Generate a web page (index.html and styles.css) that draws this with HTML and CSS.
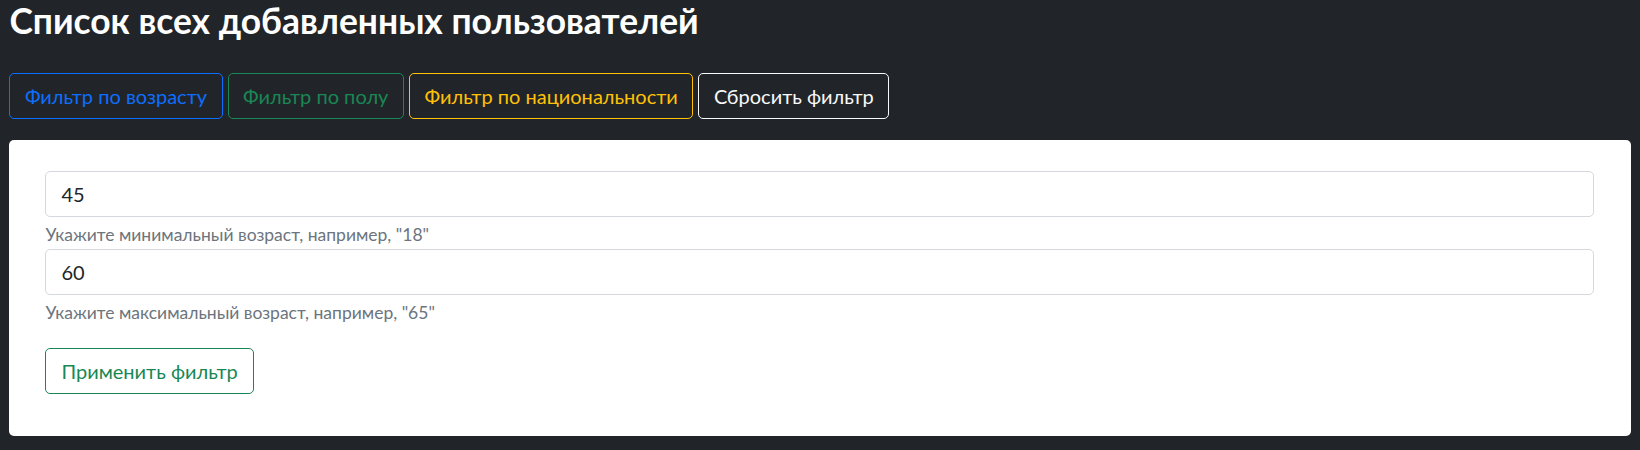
FILE: index.html
```html
<!DOCTYPE html>
<html lang="ru">
<head>
<meta charset="utf-8">
<title>Список пользователей</title>
<link rel="stylesheet" href="styles.css">
</head>
<body>
<div class="container">
  <h3 class="title">Список всех добавленных пользователей</h3>
  <div class="filters">
    <button class="btn btn-blue">Фильтр по возрасту</button>
    <button class="btn btn-green">Фильтр по полу</button>
    <button class="btn btn-yellow">Фильтр по национальности</button>
    <button class="btn btn-light">Сбросить фильтр</button>
  </div>
  <div class="card">
    <form class="filter-form">
      <input class="field" type="text" value="45">
      <div class="help">Укажите минимальный возраст, например, "18"</div>
      <input class="field" type="text" value="60">
      <div class="help">Укажите максимальный возраст, например, "65"</div>
      <button type="button" class="btn btn-apply">Применить фильтр</button>
    </form>
  </div>
</div>
</body>
</html>
```
FILE: styles.css
```css
* { box-sizing: border-box; }
html, body { margin: 0; }
body {
  background: #212529;
  color: #fff;
  font-family: Lato, "Noto Sans", sans-serif;
}
.container {
  padding: 0 9.375px;
}
.title {
  margin: 0;
  font-size: 35.4px;
  line-height: 42px;
  font-weight: 700;
  color: #fff;
}
.filters {
  display: flex;
  gap: 5px;
  margin-top: 31px;
}
.btn {
  display: inline-block;
  font-family: Lato, "Noto Sans", sans-serif;
  font-size: 20px;
  line-height: 30px;
  padding: 7px 14.5px;
  border: 1px solid transparent;
  border-radius: 5px;
  background: transparent;
  cursor: pointer;
}
.btn-blue { color: #0d6efd; border-color: #0d6efd; }
.btn-green { color: #198754; border-color: #198754; }
.btn-yellow { color: #ffc107; border-color: #ffc107; }
.btn-light { color: #f8f9fa; border-color: #f8f9fa; }
.card {
  margin-top: 21px;
  background: #fff;
  border-radius: 5px;
  padding: 31px 37px 42px 36px;
}
.filter-form {
  display: flex;
  flex-direction: column;
  align-items: flex-start;
}
.field {
  width: 100%;
  height: 46px;
  padding: 0 15px;
  border: 1px solid #d5d9de;
  border-radius: 5px;
  font-family: Lato, "Noto Sans", sans-serif;
  font-size: 20px;
  color: #212529;
  background: #fff;
  outline: none;
}
.help {
  margin-top: 5px;
  font-size: 17.5px;
  line-height: 26.5px;
  color: #6c757d;
}
.btn-apply {
  margin-top: 22px;
  padding: 7px 15px;
  color: #198754;
  border-color: #198754;
}
```
